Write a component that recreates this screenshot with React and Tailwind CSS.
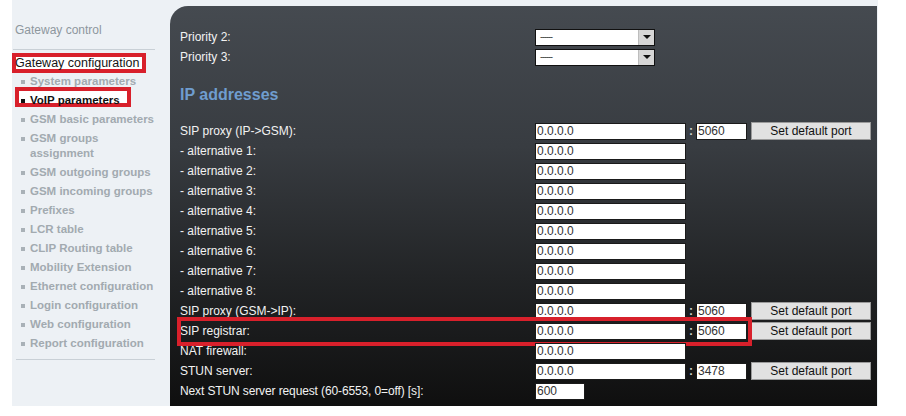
import React from 'react';

const menu = [
  { label: 'System parameters' },
  { label: 'VoIP parameters', active: true },
  { label: 'GSM basic parameters' },
  { label: 'GSM groups assignment' },
  { label: 'GSM outgoing groups' },
  { label: 'GSM incoming groups' },
  { label: 'Prefixes' },
  { label: 'LCR table' },
  { label: 'CLIP Routing table' },
  { label: 'Mobility Extension' },
  { label: 'Ethernet configuration' },
  { label: 'Login configuration' },
  { label: 'Web configuration' },
  { label: 'Report configuration' },
];

const rows = [
  { label: 'SIP proxy (IP->GSM):', port: '5060' },
  { label: '- alternative 1:' },
  { label: '- alternative 2:' },
  { label: '- alternative 3:' },
  { label: '- alternative 4:' },
  { label: '- alternative 5:' },
  { label: '- alternative 6:' },
  { label: '- alternative 7:' },
  { label: '- alternative 8:' },
  { label: 'SIP proxy (GSM->IP):', port: '5060' },
  { label: 'SIP registrar:', port: '5060', marked: true },
  { label: 'NAT firewall:' },
  { label: 'STUN server:', port: '3478' },
];

const Select = () => (
  <div className="w-[120px] h-[17px] bg-white border border-[#111] flex items-center">
    <span className="flex-1 pl-[4px] text-[9px] leading-none text-[#222] tracking-[-1px]">------</span>
    <div className="w-[16px] h-[15px] bg-[#d6d6d6] border-l border-[#bdbdbd] flex items-center justify-center">
      <div className="w-0 h-0 border-l-[4px] border-r-[4px] border-t-[4px] border-l-transparent border-r-transparent border-t-[#111]" />
    </div>
  </div>
);

const Field = ({ value, width }) => (
  <div
    className={`${width} h-[17px] bg-white border border-[#1a1a1a] flex items-center pl-[1px] text-[12px] leading-none text-[#333]`}
  >
    {value}
  </div>
);

const Row = ({ label, children, marked, tight }) => (
  <div className="relative h-[20px] flex items-center">
    {marked && (
      <div className="absolute left-[-3px] top-[-4px] w-[575px] h-[29px] border-[4px] border-[#d8202b]" />
    )}
    <span className={`w-[355px] text-[12px] leading-none text-[#f2f2f2] ${tight ? 'tracking-[-0.12px]' : ''}`}>
      {label}
    </span>
    {children}
  </div>
);

export default function App() {
  return (
    <div className="w-[906px] h-[416px] bg-white font-['Liberation_Sans',Arial,sans-serif] overflow-hidden">
      <div className="ml-[12px] w-[866px] h-[406px] bg-[#edf1f5] flex">
        {/* SIDEBAR */}
        <aside className="w-[158px] shrink-0 pt-[23px]">
          <div className="pl-[3px] text-[12px] leading-[14px] text-[#8d979e]">Gateway control</div>
          <div className="ml-[1px] mt-[12px] w-[142px] h-px bg-[#c9d0d6]" />

          <div className="mt-[3px] w-[134px] h-[20px] border-[4px] border-[#d8202b] bg-white flex items-center text-[12.5px] leading-none text-[#151515]">
            <span className="-ml-[1px]">Gateway configuration</span>
          </div>

          <ul className="mt-[1px]">
            {menu.map((m) => (
              <li key={m.label} className="relative flex items-start pl-[9px] mb-[4px]">
                {m.active && (
                  <div className="absolute left-[3px] top-[-6px] w-[116px] h-[20px] border-[4px] border-[#d8202b] bg-white" />
                )}
                <span
                  className={`relative mt-[6px] w-[4px] h-[4px] shrink-0 ${m.active ? 'bg-[#111]' : 'bg-[#a9b1b7]'}`}
                />
                <span
                  className={`relative ml-[5px] w-[127px] text-[11.5px] leading-[15px] font-bold ${
                    m.active ? 'text-[#111]' : 'text-[#a2aab0]'
                  }`}
                >
                  {m.label}
                </span>
              </li>
            ))}
          </ul>
          <div className="ml-[4px] mt-[8px] w-[139px] h-px bg-[#c9d0d6]" />
        </aside>

        {/* MAIN PANEL */}
        <main className="mt-[6px] w-[707px] h-[400px] rounded-tl-[18px] bg-[linear-gradient(180deg,#454a50_0%,#383c41_35%,#222426_68%,#0f0f0f_100%)] pl-[10px] pt-[21px]">
          <Row label="Priority 2:">
            <Select />
          </Row>
          <Row label="Priority 3:">
            <Select />
          </Row>

          <div className="h-[54px] pt-[19px]">
            <h2 className="text-[16px] leading-[18px] font-bold text-[#6f9dcf]">IP addresses</h2>
          </div>

          {rows.map((r) => (
            <Row key={r.label} label={r.label} marked={r.marked}>
              <Field value="0.0.0.0" width="w-[151px]" />
              {r.port && (
                <>
                  <span className="w-[10px] text-center text-[12px] font-bold leading-none text-[#d0d0d0]">:</span>
                  <Field value={r.port} width="w-[51px]" />
                  <button className="ml-[4px] w-[120px] h-[18px] bg-[#e1e1e1] border border-[#9a9a9a] text-[12px] leading-none text-[#111]">
                    Set default port
                  </button>
                </>
              )}
            </Row>
          ))}
          <Row label="Next STUN server request (60-6553, 0=off) [s]:" tight>
            <Field value="600" width="w-[50px]" />
          </Row>
        </main>
      </div>
    </div>
  );
}
